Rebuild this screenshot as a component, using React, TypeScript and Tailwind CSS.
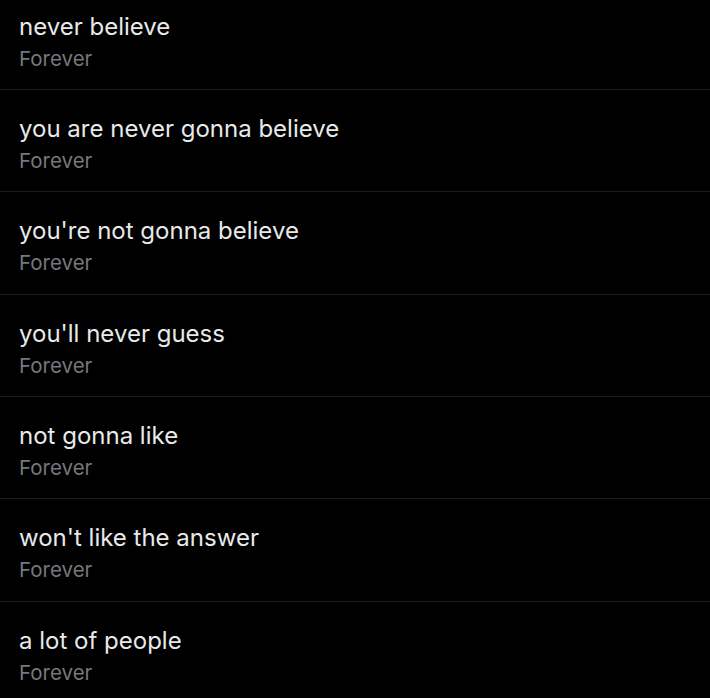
const items = [
  "never believe",
  "you are never gonna believe",
  "you're not gonna believe",
  "you'll never guess",
  "not gonna like",
  "won't like the answer",
  "a lot of people",
];

export default function App() {
  return (
    <div className="h-[698px] w-[710px] overflow-hidden bg-black font-['Inter',sans-serif]">
      <div className="-mt-[12.5px]">
        {items.map((item, i) => (
          <div
            key={i}
            className="box-border h-[102.4px] border-b border-[#1c1d1f] px-[19px] pt-[24px]"
          >
            <div className="text-[24px] leading-[30px] text-[#e7e9ea]">{item}</div>
            <div className="text-[20.5px] leading-[33px] text-[#75787c]">Forever</div>
          </div>
        ))}
      </div>
    </div>
  );
}
